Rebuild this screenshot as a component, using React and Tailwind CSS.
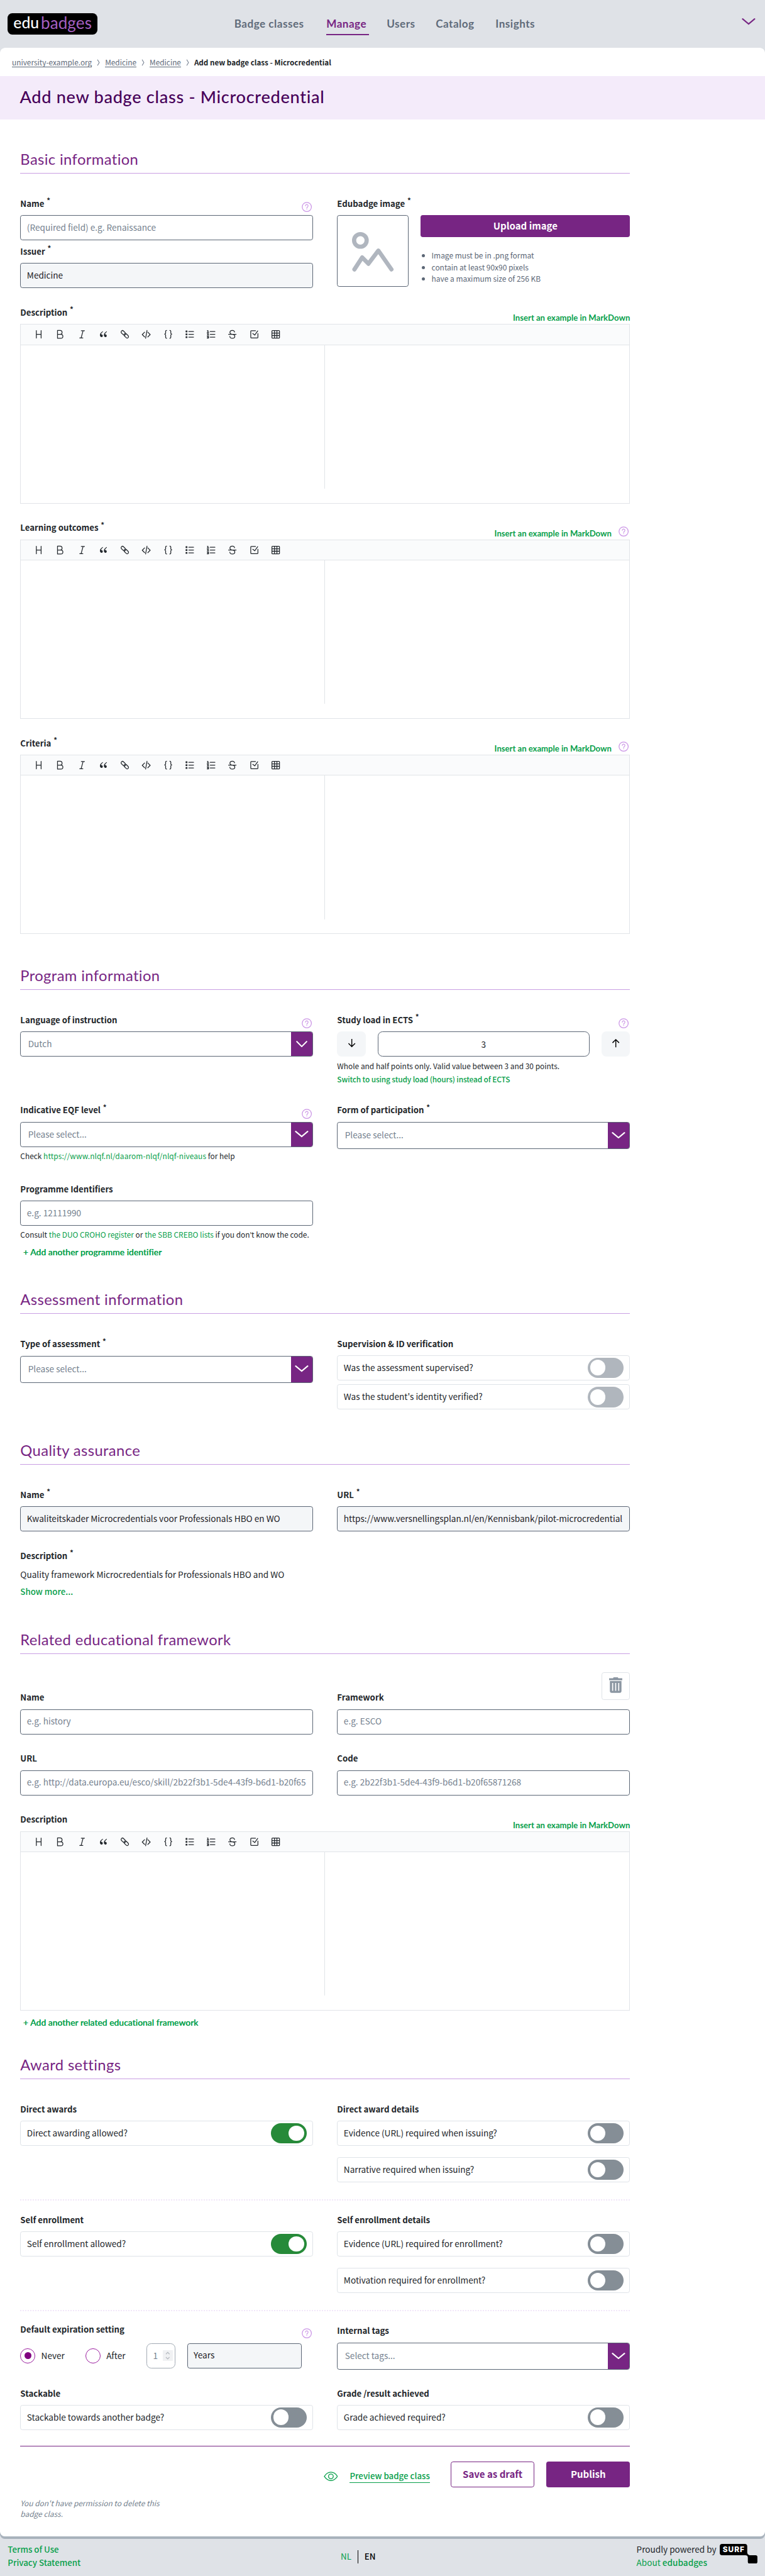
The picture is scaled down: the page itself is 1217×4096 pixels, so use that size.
import React from 'react';

const toolbarIcons = [
  <path d="M12 5v38M36 5v38M12 24h24" />,
  <path d="M24 24c5.506 0 9.969-4.477 9.969-10S29.506 4 24 4H11v20h13zM28.031 44C33.537 44 38 39.523 38 34s-4.463-10-9.969-10H11v20h17.031z" />,
  <path d="M20 6h16M12 42h16M29 6L19 42" />,
  <g fill="currentColor" stroke="none">
    <path d="M18.853 9.116C11.323 13.952 7.14 19.58 6.303 26.003C5 36 13.94 40.893 18.47 36.497C23 32.1 20.285 26.52 17.005 24.994C13.725 23.469 11.719 24 12.069 21.962C12.419 19.924 17.088 14.274 21.188 11.642C21.5 11.3 21.5 10.9 21.3 10.5L20.3 9.3C19.8 8.7 19.4 8.76 18.853 9.116Z" />
    <path transform="translate(19.8 0)" d="M18.853 9.116C11.323 13.952 7.14 19.58 6.303 26.003C5 36 13.94 40.893 18.47 36.497C23 32.1 20.285 26.52 17.005 24.994C13.725 23.469 11.719 24 12.069 21.962C12.419 19.924 17.088 14.274 21.188 11.642C21.5 11.3 21.5 10.9 21.3 10.5L20.3 9.3C19.8 8.7 19.4 8.76 18.853 9.116Z" />
  </g>,
  <path d="M26.24 16.373L17.1 7.233c-2.661-2.66-7.035-2.599-9.768.135c-2.734 2.733-2.795 7.107-.135 9.767l7.742 7.742c2.66 2.66 8.4 4 11.17 1.265c2.733-2.733 2.794-7.106.134-9.767M32.903 23.003l7.742 7.742c2.66 2.66 2.6 7.034-.135 9.767c-2.733 2.734-7.106 2.795-9.767.135l-9.14-9.14c-2.66-2.66-2.6-7.034.134-9.767c2.733-2.733 8.5-1.4 11.166 1.263" />,
  <path d="M16 13L4 25.432L16 37M32 13l12 12.432L32 37M28 4l-7 40" />,
  <path d="M16 4c-2 0-5 1-5 5v9c0 3-5 5-5 5s5 2 5 5v11c0 4 3 5 5 5M32 4c2 0 5 1 5 5v9c0 3 5 5 5 5s-5 2-5 5v11c0 4-3 5-5 5" />,
  <path d="M20 10h24M20 24h24M20 38h24M6 7h5v5H6zM6 21.500h5v5H6zM6 36h5v5H6z" />,
  <path d="M20 10h24M20 24h24M20 38h24M6 5h3v9M5 14h8M5 20h7l-6 8h7M5 34h7v4H7h5v5H5" />,
  <path d="M5 24h38M35 13c0-2-2-9-11-9S12 9 12 14c0 6 5 9 12 10c8 1 12.500 4 12.500 10S31 44 24 44S12 40 11.500 34" />,
  <path d="M42 20v19a3 3 0 01-3 3H9a3 3 0 01-3-3V9a3 3 0 013-3h21M16 20l10 8L41 7" />,
  <path d="M8 5h32a3 3 0 013 3v32a3 3 0 01-3 3H8a3 3 0 01-3-3V8a3 3 0 013-3zM5 18h38M5 30h38M18 5v38M30 5v38" />,
];

function Help() {
  return (
    <svg width="17" height="17" viewBox="0 0 17 17" fill="none" stroke="#cb95e6" className="shrink-0">
      <circle cx="8.500" cy="8.500" r="7.700" strokeWidth="1.300" />
      <path d="M6.300 6.700a2.200 2.200 0 1 1 3.500 1.700c-.9.600-1.300 1-1.300 2" strokeWidth="1.200" strokeLinecap="round" />
      <circle cx="8.500" cy="12.400" r=".4" strokeWidth=".7" />
    </svg>
  );
}

function Label({ children, required, help, short, action }) {
  return (
    <div className={`flex justify-between ${short ? 'h-[30px]' : 'h-[31px]'}`}>
      <div className="whitespace-nowrap text-[13.92px] leading-[24px] font-bold">
        {children}
        {required && <span className="relative -top-[6px] ml-[4px] text-[12px]">*</span>}
      </div>
      <div className="flex gap-3">
        {action && <Insert />}
        {help && <div className="mt-[9px] mr-[2px]"><Help /></div>}
      </div>
    </div>
  );
}

function Insert() {
  return (
    <a className="mt-[12px] whitespace-nowrap font-[Lato] text-[13.8px] leading-[18px] font-bold text-[#08a04b]">
      Insert an example in MarkDown
    </a>
  );
}

function Input({ children, filled }) {
  return (
    <div
      className={`flex h-[42px] items-center whitespace-nowrap rounded border border-[#5b6675] px-2.5 pb-0.5 text-[14.33px] leading-6 ${filled ? 'bg-[#f4f6f8] text-[#1d2126]' : 'bg-white text-[#747f8e]'}`}
    >
      {children}
    </div>
  );
}

function Chevron({ small, color = 'white' }) {
  return (
    <svg width={small ? 19 : 23} height="11" viewBox="0 0 23 11" preserveAspectRatio="none" fill="none" stroke={color} strokeWidth="2.200" strokeLinecap="round">
      <path d="M1.500 1.200 11.500 9.500 21.500 1.200" />
    </svg>
  );
}

function Select({ children, height = 'h-[42px]', small }) {
  return (
    <div className={`flex items-stretch overflow-hidden rounded border border-[#5b6675] ${height}`}>
      <div className="flex flex-1 items-center pb-0.5 pl-3 text-[14.33px] text-[#747f8e]">{children}</div>
      <div className="flex w-9 items-center justify-center bg-[#772583] pb-px">
        <Chevron small={small} />
      </div>
    </div>
  );
}

function Toggle({ children, on, muted }) {
  const track = on ? 'bg-[#268a39] justify-end' : muted ? 'bg-[#b0b6bd]' : 'bg-[#858e96]';
  return (
    <div className="flex h-[42px] items-center justify-between rounded border border-[#dfe3e8] px-2.5">
      <span className="pb-px text-[14.33px] leading-6">{children}</span>
      <span className={`flex h-[34px] w-[60px] items-center rounded-full px-1 ${track}`}>
        <span className="size-[26px] rounded-full bg-white" />
      </span>
    </div>
  );
}

function Heading({ children, gap }) {
  return (
    <h2 className={`h-10 border-b border-[#c99fe3] font-[Lato] text-[25px] leading-[32px] tracking-[0.4px] text-[#772583] ${gap}`}>
      {children}
    </h2>
  );
}

function Editor() {
  return (
    <div className="h-[300px] border border-[#e1e4e8]">
      <div className="flex h-[34px] items-center border-b border-[#e1e4e8] bg-[#fafbfc] pl-3 text-[#24292e]">
        {toolbarIcons.map((icon, i) => (
          <span key={i} className="flex w-9 justify-center">
            <svg width="16" height="16" viewBox="0 0 48 48" fill="none" stroke="currentColor" strokeWidth="4" strokeLinecap="round" strokeLinejoin="round">
              {icon}
            </svg>
          </span>
        ))}
      </div>
      <div className="h-60 w-1/2 border-r border-[#e1e4e8]" />
    </div>
  );
}

function Row({ children, className }) {
  return <div className={`grid grid-cols-2 items-start gap-x-10 ${className}`}>{children}</div>;
}

function Green({ children }) {
  return <a className="text-[#08a04b]">{children}</a>;
}

function AddLink({ children }) {
  return <a className="ml-[5px] block font-[Lato] text-[14.57px] leading-5 font-medium tracking-[0.05px] text-[#08a04b] [text-shadow:0_0_0.5px_#08a04b]">{children}</a>;
}

function Crumb({ children }) {
  return (
    <>
      <a className="h-[17px] border-b border-[#5b6675] leading-[16px] text-[#5f6b7a]">{children}</a>
      <svg width="22" height="17" viewBox="0 0 22 17" fill="none" stroke="#7c8695" strokeWidth="1.200">
        <path d="m9.500 4 3 5-3 5" />
      </svg>
    </>
  );
}

function Header() {
  return (
    <header className="flex h-20 bg-[#dfe2e7]">
      <div className="mt-[22px] ml-[13px] flex h-9 w-[150px] items-center justify-center gap-[3px] rounded-lg bg-black pb-1 font-[Lato] text-[26px] leading-8">
        <span className="font-medium text-white">edu</span>
        <span className="tracking-[0.1px] text-[#a45fc0] [font-size:27.4px]">badges</span>
      </div>
      <nav className="ml-[229px] flex pt-[28px] font-[Lato] text-[18px] leading-6 font-bold tracking-[0.5px] text-[#5f6b7a]">
        <a className="w-[154px]">Badge classes</a>
        <a className="mr-[30px] h-[31px] w-[71px] border-b-[3px] border-[#772583] text-[#772583]">Manage</a>
        <a className="w-[82px]">Users</a>
        <a className="w-[100px]">Catalog</a>
        <a>Insights</a>
      </nav>
      <div className="mt-[31px] mr-4 ml-auto">
        <Chevron color="#772583" />
      </div>
    </header>
  );
}

function Footer() {
  return (
    <footer className="flex h-[62px] justify-between bg-[#dfe2e7] pr-3 pl-[13px] text-[14px] leading-[22px]">
      <div className="w-[557px] pt-[7px] font-medium text-[#08a04b]">
        <div>Terms of Use</div>
        <div>Privacy Statement</div>
      </div>
      <div className="mt-[19px] flex h-[22px]">
        <span className="border-r border-black pr-[11px] leading-[21px] text-[#08a04b]">NL</span>
        <span className="pl-2.5 leading-[21px] font-medium text-black">EN</span>
      </div>
      <div className="ml-auto flex gap-[5px] pt-[6px]">
        <div className="w-[134px] whitespace-nowrap text-[14.3px]">
          <div>Proudly powered by</div>
          <div className="text-[#08a04b]">About <span className="font-medium">edubadges</span></div>
        </div>
        <svg width="64" height="34" viewBox="0 0 64 34" className="mt-[1px]">
          <path d="M4 1h38q4 0 4 4v10q0 4 4 5h10q3 0 3 3v8q0 3-3 3h-10q-3 0-3-3v-7q0-4-4-4H4q-4 0-4-4V5q0-4 4-4z" />
          <text x="5" y="15" fill="white" fontFamily="Inter" fontWeight="800" fontSize="12.500" textLength="36">SURF</text>
        </svg>
      </div>
    </footer>
  );
}

export default function App() {
  return (
    <div className="bg-[#dfe2e7] font-['Noto_Sans_CJK_SC',sans-serif] text-[#212529] [zoom:0.951]">
      <Header />
      <div className="rounded-[8px] bg-[#a8b2bc] pb-1">
        <main className="h-[4161px] rounded-[8px] bg-white">
          <div className="flex h-[47px] pt-4 pl-5 text-[12.49px]">
            <Crumb>university-example.org</Crumb>
            <Crumb>Medicine</Crumb>
            <Crumb>Medicine</Crumb>
            <span className="text-[12.26px] leading-[16px] font-bold">Add new badge class - Microcredential</span>
          </div>
          <div className="h-[73px] bg-[#f4ebfa] pt-[17px] pl-[33px]">
            <h1 className="font-[Lato] text-[28.5px] leading-9 font-medium tracking-[0.74px] text-[#470059]">
              Add new badge class - Microcredential
            </h1>
          </div>

          <form className="ml-[34px] w-[1020px]">
            <Heading gap="mt-[50px]">Basic information</Heading>
            <Row className="mb-[29px] h-[182px] pt-[39px]">
              <div>
                <Label required help>Name</Label>
                <Input>(Required field) e.g. Renaissance</Input>
                <div className="mt-[7px]">
                  <Label required>Issuer</Label>
                </div>
                <Input filled>Medicine</Input>
              </div>
              <div>
                <Label required>Edubadge image</Label>
                <div className="flex gap-5">
                  <div className="flex size-[120px] items-center justify-center rounded border border-[#5b6675]">
                    <svg width="70" height="70" viewBox="0 0 70 70" fill="none" stroke="#b0b6bf" strokeLinecap="round" strokeLinejoin="round" className="mt-1">
                      <circle cx="14" cy="15" r="10.500" strokeWidth="7" />
                      <path d="M4 63.500 17 43.500 27.500 54 44 32 66 63.500" strokeWidth="7" />
                    </svg>
                  </div>
                  <div className="flex-1">
                    <div className="flex h-9 items-center justify-center rounded bg-[#772583] pb-px text-[15.8px] font-bold text-white">Upload image</div>
                    <ul className="mt-[22px] list-disc pl-[18px] text-[12.57px] leading-[19px] text-[#5b6675]">
                      <li>Image must be in .png format</li>
                      <li>contain at least 90x90 pixels</li>
                      <li>have a maximum size of 256 KB</li>
                    </ul>
                  </div>
                </div>
              </div>
            </Row>
            <div className="mt-[29px] pt-[10px]">
              <Label required action>Description</Label>
              <Editor />
            </div>
            <div className="mt-[29px]">
              <Label required action help>Learning outcomes</Label>
              <Editor />
            </div>
            <div className="mt-[29px]">
              <Label required action help>Criteria</Label>
              <Editor />
            </div>

            <Heading gap="mt-[53px]">Program information</Heading>
            <Row className="h-[190px] pt-[39px]">
              <div>
                <Label help>Language of instruction</Label>
                <Select small>Dutch</Select>
              </div>
              <div>
                <Label required help>Study load in ECTS</Label>
                <div className="flex h-[42px] justify-between">
                  <div className="flex w-12 items-center justify-center rounded-lg bg-[#f4f6f8]">
                    <svg width="14" height="16" viewBox="0 0 14 16" fill="none" stroke="black" strokeWidth="1.500" className="mb-1">
                      <path d="M7 1v13M1.500 8.500 7 14l5.500-5.500" />
                    </svg>
                  </div>
                  <div className="flex w-[354px] items-center justify-center rounded-lg border border-[#5b6675] pb-px text-[14.33px]">3</div>
                  <div className="flex w-12 items-center justify-center rounded-lg bg-[#f4f6f8]">
                    <svg width="14" height="16" viewBox="0 0 14 16" fill="none" stroke="black" strokeWidth="1.500" className="mb-1">
                      <path d="M7 15V2M1.500 7.500 7 2l5.500 5.500" />
                    </svg>
                  </div>
                </div>
                <div className="mt-[5px] whitespace-nowrap text-[12.54px] leading-[22px]">
                  <p>Whole and half points only. Valid value between 3 and 30 points.</p>
                  <p className="font-medium tracking-[-0.15px]"><Green>Switch to using study load (hours) instead of ECTS</Green></p>
                </div>
              </div>
            </Row>
            <Row className="h-[132px]">
              <div>
                <Label required help>Indicative EQF level</Label>
                <Select>Please select...</Select>
                <p className="mt-1 text-[12.54px] leading-[22px]">
                  Check <span className="tracking-[0.1px]"><Green>https://www.nlqf.nl/daarom-nlqf/nlqf-niveaus</Green></span> for help
                </p>
              </div>
              <div>
                <Label required>Form of participation</Label>
                <Select height="h-[45px]">Please select...</Select>
              </div>
            </Row>
            <Row className="h-[180px]">
              <div>
                <Label>Programme Identifiers</Label>
                <Input>e.g. 12111990</Input>
                <p className="mt-1 whitespace-nowrap text-[12.54px] leading-[22px]">
                  Consult <Green>the DUO CROHO register</Green> or <Green>the SBB CREBO lists</Green> if you don<span className="font-[Lato]">’</span>t know the code.
                </p>
                <div className="mt-[6px]"><AddLink>+ Add another programme identifier</AddLink></div>
              </div>
            </Row>

            <Heading>Assessment information</Heading>
            <Row className="h-[212px] pt-[39px]">
              <div>
                <Label required>Type of assessment</Label>
                <Select height="h-[45px]">Please select...</Select>
              </div>
              <div>
                <Label short>Supervision &amp; ID verification</Label>
                <div className="flex flex-col gap-[7px]">
                  <Toggle muted>Was the assessment supervised?</Toggle>
                  <Toggle muted>Was the student's identity verified?</Toggle>
                </div>
              </div>
            </Row>

            <Heading>Quality assurance</Heading>
            <Row className="h-[141px] pt-[39px]">
              <div>
                <Label required>Name</Label>
                <Input filled>Kwaliteitskader Microcredentials voor Professionals HBO en WO</Input>
              </div>
              <div>
                <Label required>URL</Label>
                <Input filled>https://www.versnellingsplan.nl/en/Kennisbank/pilot-microcredential</Input>
              </div>
            </Row>
            <div className="h-[136px] text-[14.33px] leading-[30px]">
              <div className="h-[27px]"><Label required>Description</Label></div>
              <p>Quality framework Microcredentials for Professionals HBO and WO</p>
              <p className="text-[14px] font-medium"><Green>Show more...</Green></p>
            </div>

            <Heading>Related educational framework</Heading>
            <div className="mt-[30px] flex h-[31px] items-start justify-end">
              <div className="flex h-[46px] w-12 items-center justify-center rounded border border-[#dfe3e8] pb-0.5">
                <svg width="22" height="26" viewBox="0 0 22 26" fill="#8b96a2">
                  <path d="M7.500 0h7l1 1.500H22V5H0V1.500h6.500z" />
                  <path fillRule="evenodd" d="M1.300 6.300h19.400V23q0 3-3 3H4.300q-3 0-3-3zM5 9.500v13h1.800v-13zM10.100 9.500v13h1.800v-13zM15.200 9.500v13H17v-13z" />
                </svg>
              </div>
            </div>
            <Row className="h-[102px]">
              <div>
                <Label>Name</Label>
                <Input>e.g. history</Input>
              </div>
              <div>
                <Label>Framework</Label>
                <Input>e.g. ESCO</Input>
              </div>
            </Row>
            <Row className="h-[102px]">
              <div>
                <Label>URL</Label>
                <Input>e.g. http://data.europa.eu/esco/skill/2b22f3b1-5de4-43f9-b6d1-b20f65</Input>
              </div>
              <div>
                <Label>Code</Label>
                <Input>e.g. 2b22f3b1-5de4-43f9-b6d1-b20f65871268</Input>
              </div>
            </Row>
            <div className="h-[406px]">
              <Label action>Description</Label>
              <Editor />
              <div className="mt-[9px]"><AddLink>+ Add another related educational framework</AddLink></div>
            </div>

            <Heading>Award settings</Heading>
            <Row className="h-[203px] border-b-3 border-dotted border-[#f1e6f9] pt-[39px]">
              <div>
                <Label short>Direct awards</Label>
                <Toggle on>Direct awarding allowed?</Toggle>
              </div>
              <div>
                <Label short>Direct award details</Label>
                <div className="flex flex-col gap-[19px]">
                  <Toggle>Evidence (URL) required when issuing?</Toggle>
                  <Toggle>Narrative required when issuing?</Toggle>
                </div>
              </div>
            </Row>
            <Row className="h-[185px] border-b-3 border-dotted border-[#f1e6f9] pt-[21px]">
              <div>
                <Label short>Self enrollment</Label>
                <Toggle on>Self enrollment allowed?</Toggle>
              </div>
              <div>
                <Label short>Self enrollment details</Label>
                <div className="flex flex-col gap-[19px]">
                  <Toggle>Evidence (URL) required for enrollment?</Toggle>
                  <Toggle>Motivation required for enrollment?</Toggle>
                </div>
              </div>
            </Row>
            <Row className="h-[126px] pt-[19px]">
              <div>
                <div className="h-[34px]"><Label help>Default expiration setting</Label></div>
                <div className="flex h-[42px] items-center text-[14.33px]">
                  <span className="flex size-[25px] items-center justify-center rounded-full border border-[#9c1fa0]">
                    <span className="size-3 rounded-full bg-[#800080]" />
                  </span>
                  <span className="w-[84px] pb-px pl-2.5">Never</span>
                  <span className="size-[25px] rounded-full border border-[#9c1fa0]" />
                  <span className="w-[77px] pb-px pl-2.5">After</span>
                  <span className="flex h-[42px] w-12 items-center justify-between rounded-lg border border-[#a3abb5] pr-[3px] pb-px pl-2.5 text-[#747f8e]">
                    1
                    <span className="flex h-[18px] w-[17px] items-center justify-center bg-[#f0f1f3]">
                      <svg width="8" height="14" viewBox="0 0 8 14" fill="none" stroke="#b3b8bf" strokeWidth="1.300">
                        <path d="M1 4.500 4 1.500l3 3M1 9.500l3 3 3-3" />
                      </svg>
                    </span>
                  </span>
                  <div className="ml-5 w-48"><Input filled>Years</Input></div>
                </div>
              </div>
              <div>
                <div className="h-[33px] pt-0.5"><Label>Internal tags</Label></div>
                <Select height="h-[45px]">Select tags...</Select>
              </div>
            </Row>
            <Row className="h-[99px]">
              <div>
                <Label short>Stackable</Label>
                <Toggle>Stackable towards another badge?</Toggle>
              </div>
              <div>
                <Label short>Grade /result achieved</Label>
                <Toggle>Grade achieved required?</Toggle>
              </div>
            </Row>

            <div className="flex justify-end border-t-2 border-[#772583] pt-[25px]">
              <svg width="24" height="16" viewBox="0 0 24 16" fill="none" stroke="#08a04b" strokeWidth="1.400" className="mt-[17px] mr-5">
                <path d="M1 8C4 3.500 7.500 1 12 1s8 2.500 11 7c-3 4.500-6.500 7-11 7S4 12.500 1 8z" />
                <circle cx="12" cy="8" r="4" />
              </svg>
              <a className="mt-[14px] mr-[35px] h-[22px] border-b border-[#08a04b] text-[13.98px] leading-[21px] font-medium text-[#08a04b]">Preview badge class</a>
              <div className="mr-5 flex h-[43px] w-[140px] items-center justify-center rounded border border-[#772583] pb-px text-[15.78px] font-bold text-[#772583]">Save as draft</div>
              <div className="flex h-[43px] w-[140px] items-center justify-center rounded bg-[#772583] pb-px text-[15.78px] font-bold text-white">Publish</div>
            </div>
            <p className="mt-[17px] w-[245px] text-[12.54px] leading-[18px] text-[#747f8e] italic">
              You don't have permission to delete this badge class.
            </p>
          </form>
        </main>
      </div>
      <Footer />
    </div>
  );
}
